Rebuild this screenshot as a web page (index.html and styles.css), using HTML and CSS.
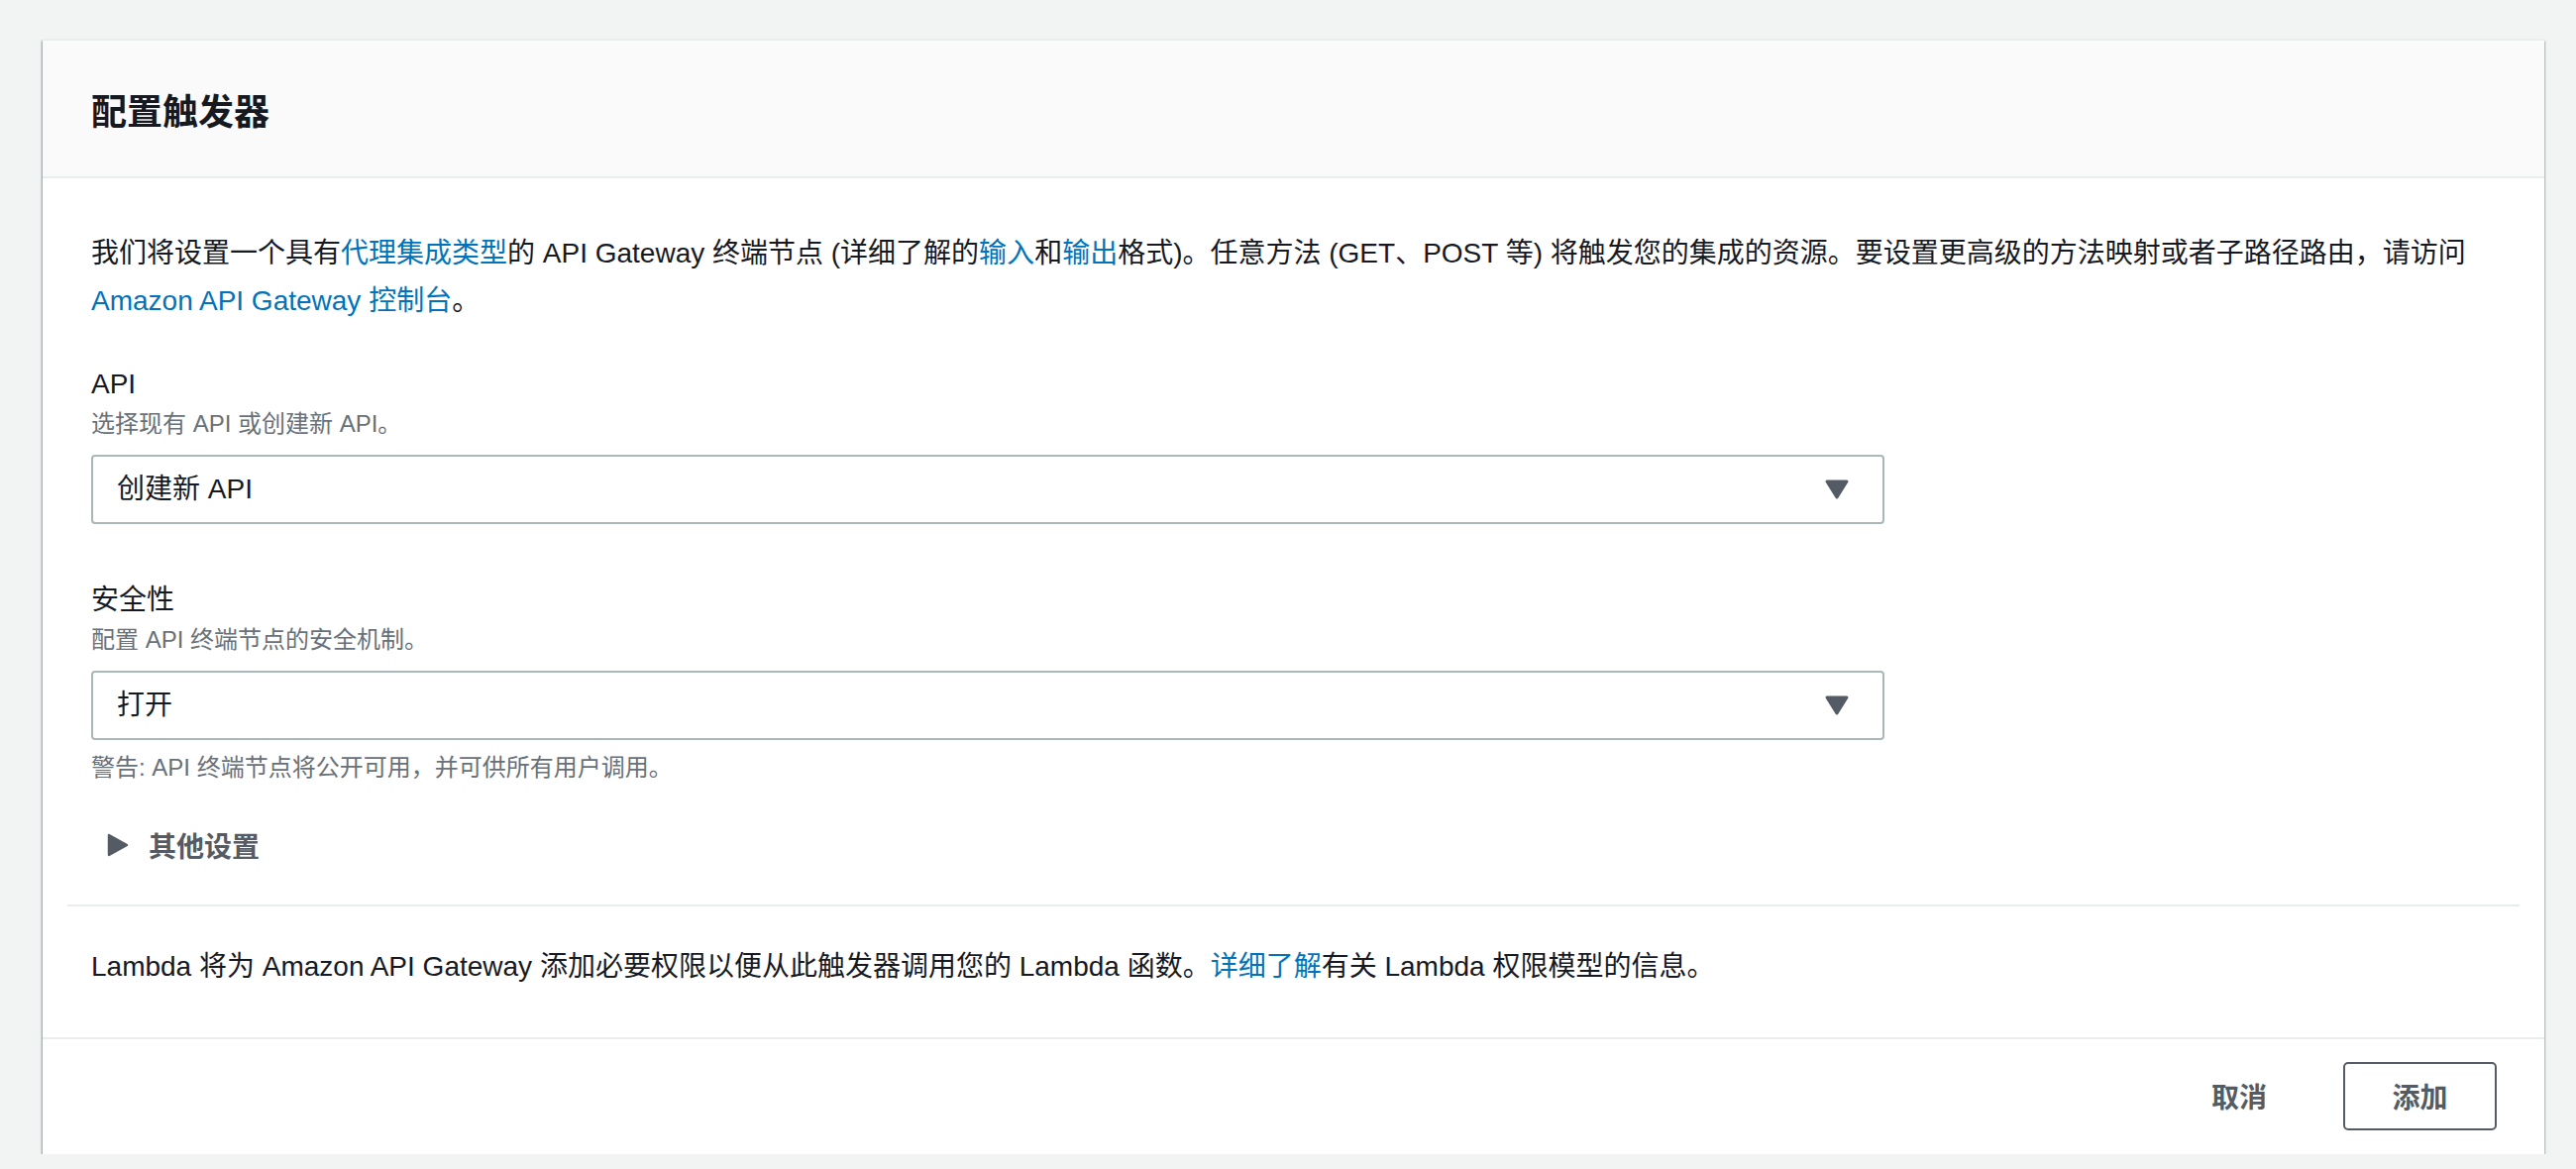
FILE: index.html
```html
<!DOCTYPE html>
<html lang="zh-CN">
<head>
<meta charset="utf-8">
<title>配置触发器</title>
<link rel="stylesheet" href="styles.css">
</head>
<body>
<div class="card">
  <div class="card-header">
    <h2 class="title">配置触发器</h2>
  </div>
  <div class="card-body">
    <div class="section">
      <p class="intro">我们将设置一个具有<a class="link" href="#">代理集成类型</a>的 API Gateway 终端节点 (详细了解的<a class="link" href="#">输入</a>和<a class="link" href="#">输出</a>格式)。任意方法 (GET、POST 等) 将触发您的集成的资源。要设置更高级的方法映射或者子路径路由，请访问 <a class="link" href="#">Amazon API Gateway 控制台</a>。</p>

      <div class="field field-first">
        <div class="label">API</div>
        <div class="desc">选择现有 API 或创建新 API。</div>
        <div class="select">
          <span class="select-value">创建新 API</span>
          <svg class="caret" width="26" height="22" viewBox="0 0 26 22"><path d="M3 3 L23 3 L13 19 Z" fill="#545b64" stroke="#545b64" stroke-width="3" stroke-linejoin="round"/></svg>
        </div>
      </div>

      <div class="field field-second">
        <div class="label">安全性</div>
        <div class="desc">配置 API 终端节点的安全机制。</div>
        <div class="select">
          <span class="select-value">打开</span>
          <svg class="caret" width="26" height="22" viewBox="0 0 26 22"><path d="M3 3 L23 3 L13 19 Z" fill="#545b64" stroke="#545b64" stroke-width="3" stroke-linejoin="round"/></svg>
        </div>
        <div class="hint">警告: API 终端节点将公开可用，并可供所有用户调用。</div>
      </div>

      <div class="expand">
        <svg class="expand-icon" width="24" height="24" viewBox="0 0 24 24"><path d="M3 2 L21 12 L3 22 Z" fill="#545b64" stroke="#545b64" stroke-width="2.5" stroke-linejoin="round"/></svg>
        <span class="expand-text">其他设置</span>
      </div>
    </div>
    <div class="divider"></div>
    <div class="section section-note">
      <p class="note">Lambda 将为 Amazon API Gateway 添加必要权限以便从此触发器调用您的 Lambda 函数。<a class="link" href="#">详细了解</a>有关 Lambda 权限模型的信息。</p>
    </div>
  </div>
  <div class="card-footer">
    <button class="btn btn-link" type="button">取消</button>
    <button class="btn btn-normal" type="button">添加</button>
  </div>
</div>
</body>
</html>
```

FILE: styles.css
```css
* {
  box-sizing: border-box;
}

html, body {
  margin: 0;
  padding: 0;
}

body {
  background: #f2f3f3;
  padding: 40px 32px 0 43px;
  font-family: "Liberation Sans", "Noto Sans CJK SC", sans-serif;
  color: #16191f;
  font-size: 28px;
}

.card {
  background: #ffffff;
  border-top: 1px solid #eaeded;
  box-shadow: 0 2px 2px 0 rgba(0, 28, 36, 0.35), 1px 1px 2px 0 rgba(0, 28, 36, 0.15), -1px 1px 2px 0 rgba(0, 28, 36, 0.3);
}

.card-header {
  height: 139px;
  background: #fafafa;
  border-bottom: 2px solid #eaeded;
  display: flex;
  align-items: center;
  padding: 0 49px;
}

.title {
  margin: 0;
  font-size: 36px;
  font-weight: 700;
  line-height: 44px;
  color: #16191f;
  font-family: "Noto Sans CJK SC", sans-serif;
}

.card-body {
  padding: 0 25px;
}

.section {
  padding: 52px 24px 40px;
}

.intro {
  margin: 0;
  line-height: 48px;
}

.link {
  color: #0073bb;
  text-decoration: none;
}

.field-first {
  margin-top: 40px;
}

.field-second {
  margin-top: 57px;
}

.label {
  line-height: 40px;
  font-size: 28px;
  color: #16191f;
}

.desc {
  margin-top: 3px;
  font-size: 24px;
  line-height: 34px;
  color: #687078;
}

.select {
  margin-top: 14px;
  width: 1810px;
  height: 70px;
  border: 2px solid #aab7b8;
  border-radius: 4px;
  display: flex;
  align-items: center;
  justify-content: space-between;
  padding: 0 33px 0 24px;
  background: #ffffff;
}

.select-value {
  font-size: 28px;
  color: #16191f;
  line-height: 40px;
}

.caret {
  display: block;
}

.hint {
  margin-top: 11px;
  font-size: 24px;
  line-height: 34px;
  color: #687078;
}

.expand {
  margin-top: 41px;
  display: flex;
  align-items: center;
  gap: 19px;
  padding-left: 15px;
  height: 40px;
}

.expand-icon {
  display: block;
}

.expand-text {
  font-weight: 700;
  font-size: 28px;
  color: #545b64;
  font-family: "Noto Sans CJK SC", sans-serif;
}

.divider {
  height: 2px;
  background: #eaeded;
}

.section-note {
  padding: 37px 24px 47px;
}

.note {
  margin: 0;
  line-height: 48px;
}

.card-footer {
  border-top: 2px solid #eaeded;
  height: 118px;
  display: flex;
  align-items: center;
  justify-content: flex-end;
  padding: 0 48px 2px 0;
  gap: 37px;
}

.btn {
  font-family: "Noto Sans CJK SC", sans-serif;
  font-size: 28px;
  font-weight: 700;
  color: #545b64;
  background: transparent;
  cursor: pointer;
}

.btn-link {
  border: none;
  padding: 0 40px;
  height: 69px;
}

.btn-normal {
  border: 2px solid #545b64;
  border-radius: 5px;
  width: 155px;
  height: 69px;
  padding: 0;
  background: #ffffff;
}
```
